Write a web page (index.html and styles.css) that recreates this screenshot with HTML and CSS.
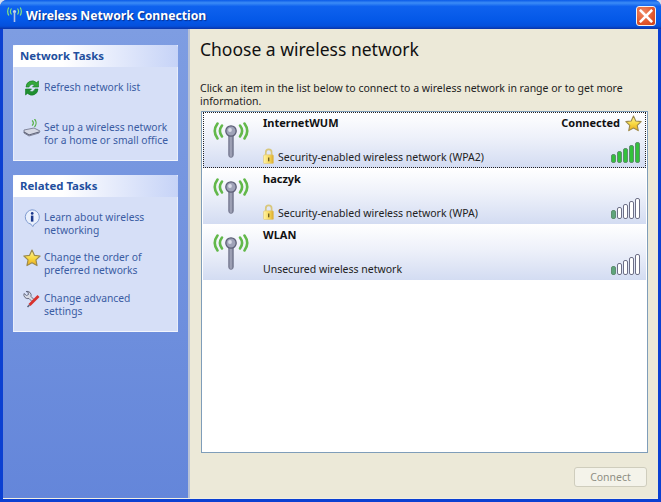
FILE: index.html
```html
<!DOCTYPE html>
<html lang="en">
<head>
<meta charset="utf-8">
<title>Wireless Network Connection</title>
<link rel="stylesheet" href="styles.css">
</head>
<body>
<svg class="defs" width="0" height="0" aria-hidden="true">
  <defs>
    <linearGradient id="star-fill" x1="0" y1="0" x2="0" y2="1">
      <stop offset="0" stop-color="#fff3a0"/>
      <stop offset=".55" stop-color="#f8d83e"/>
      <stop offset="1" stop-color="#eaa820"/>
    </linearGradient>
    <linearGradient id="lock-fill" x1="0" y1="0" x2="1" y2="0">
      <stop offset="0" stop-color="#fff4a8"/>
      <stop offset=".6" stop-color="#f6d657"/>
      <stop offset="1" stop-color="#d9a92e"/>
    </linearGradient>
    <linearGradient id="stem-fill" x1="0" y1="0" x2="1" y2="0">
      <stop offset="0" stop-color="#7a7d96"/>
      <stop offset=".5" stop-color="#a7aabd"/>
      <stop offset="1" stop-color="#6d7088"/>
    </linearGradient>
    <symbol id="antenna" viewBox="0 0 36 36">
      <g fill="none" stroke="#62b84a" stroke-width="2.6" stroke-linecap="round">
        <path d="M4.5 1.5 Q-1 9 4.5 16.5"/>
        <path d="M9 3.5 Q4.8 9 9 14.5"/>
        <path d="M31.5 1.5 Q37 9 31.5 16.5"/>
        <path d="M27 3.5 Q31.2 9 27 14.5"/>
      </g>
      <rect x="15.7" y="12" width="4.6" height="23.4" rx="2.3" fill="url(#stem-fill)" stroke="#686b84" stroke-width=".7"/>
      <circle cx="18" cy="9" r="5.2" fill="#9fa3b8" stroke="#5c5f76" stroke-width="1.3"/>
      <circle cx="17" cy="8" r="1.9" fill="#dadce8"/>
    </symbol>
    <symbol id="lock" viewBox="0 0 11 16">
      <path d="M2.8 8V4.2a2.9 2.9 0 0 1 5.8 0V8" fill="none" stroke="#d8c77c" stroke-width="1.7"/>
      <rect x=".5" y="6.8" width="10" height="8.8" rx="1.2" fill="url(#lock-fill)" stroke="#dcc27a" stroke-width=".6"/>
      <rect x="5" y="9.5" width="1.4" height="3.8" fill="#6f5f24"/>
    </symbol>
    <symbol id="star" viewBox="0 0 20 20">
      <path d="M10 1.2l2.7 5.8 6.3.8-4.6 4.3 1.2 6.3L10 15.3l-5.6 3.1 1.2-6.3L1 7.8l6.3-.8z" fill="url(#star-fill)" stroke="#9c8a4c" stroke-width="1.3" stroke-linejoin="round"/>
    </symbol>
  </defs>
</svg>

<main class="window">
  <header class="titlebar">
    <svg class="title-icon" viewBox="0 0 17 15" aria-hidden="true">
      <g fill="none" stroke="#84e67e" stroke-width="1.2">
        <path d="M5.5 1.5a5 5 0 0 0 0 6"/><path d="M2.8 0.5a8 8 0 0 0 0 8"/>
        <path d="M11.5 1.5a5 5 0 0 1 0 6"/><path d="M14.2 0.5a8 8 0 0 1 0 8"/>
      </g>
      <circle cx="8.5" cy="4.5" r="1.6" fill="#c6d2ee"/>
      <rect x="7.7" y="5" width="1.6" height="10" fill="#b5c4e8"/>
    </svg>
    <h1 class="title">Wireless Network Connection</h1>
    <button class="close" type="button" aria-label="Close">
      <svg viewBox="0 0 12 12" aria-hidden="true"><path d="M1.5 1.5l9 9M10.5 1.5l-9 9" stroke="#fff" stroke-width="2.2" stroke-linecap="square"/></svg>
    </button>
  </header>

  <div class="body">
    <aside class="sidebar">
      <section class="panel">
        <h2 class="panel-head">Network Tasks</h2>
        <ul class="tasks">
          <li class="task">
            <svg class="task-icon" viewBox="0 0 18 18" aria-hidden="true">
              <path d="M3 8a6.2 6.2 0 0 1 10.5-4.4L15.5 2v6h-6l2-2A3.6 3.6 0 0 0 6 8z" fill="#35a83a" stroke="#137a25" stroke-width=".6"/>
              <path d="M15 10a6.2 6.2 0 0 1-10.5 4.4L2.5 16v-6h6l-2 2A3.6 3.6 0 0 0 12 10z" fill="#1f8f30" stroke="#137a25" stroke-width=".6"/>
            </svg>
            <span>Refresh network list</span>
          </li>
          <li class="task">
            <svg class="task-icon" viewBox="0 0 18 18" aria-hidden="true">
              <g fill="none" stroke="#4fae3c" stroke-width="1.2"><path d="M9 1.5a3 3 0 0 1 0 5"/><path d="M11.5 0a6 6 0 0 1 0 8"/></g>
              <path d="M1 11l10-2 6 3-1 2-10 3-5-3z" fill="#d5d8e4" stroke="#5d6278" stroke-width=".7"/>
              <path d="M1 13l5 3 10-3" fill="none" stroke="#5d6278" stroke-width="1.1"/>
            </svg>
            <span>Set up a wireless network for a home or small office</span>
          </li>
        </ul>
      </section>

      <section class="panel">
        <h2 class="panel-head">Related Tasks</h2>
        <ul class="tasks">
          <li class="task">
            <svg class="task-icon" viewBox="0 0 18 18" aria-hidden="true">
              <path d="M9 .8a7.3 7.3 0 0 1 2.4 14.2L9.8 17.6 8 15.2A7.3 7.3 0 0 1 9 .8z" fill="#eaf0fc" stroke="#7f9bd0" stroke-width="1"/>
              <rect x="7.9" y="6.6" width="2.5" height="6" fill="#1a378c"/>
              <circle cx="9.2" cy="4.4" r="1.35" fill="#1a378c"/>
            </svg>
            <span>Learn about wireless networking</span>
          </li>
          <li class="task">
            <svg class="task-icon" aria-hidden="true"><use href="#star"/></svg>
            <span>Change the order of preferred networks</span>
          </li>
          <li class="task task-last">
            <svg class="task-icon" viewBox="0 0 18 18" aria-hidden="true">
              <path d="M3 1.5a4 4 0 0 1 5 5l3 3-2 2-3-3a4 4 0 0 1-5-5l2.5 2 2-1-.5-2.5z" fill="#d7dae4" stroke="#5d6278" stroke-width=".9"/>
              <path d="M15.5 6L6.5 15" stroke="#d8322e" stroke-width="2.8"/>
              <path d="M6.5 15L4.5 17" stroke="#5d6278" stroke-width="1.6"/>
            </svg>
            <span>Change advanced<br>settings</span>
          </li>
        </ul>
      </section>
    </aside>

    <div class="content">
      <h2 class="heading">Choose a wireless network</h2>
      <p class="intro">Click an item in the list below to connect to a wireless network in range or to get more information.</p>

      <div class="list">
        <article class="network selected">
          <svg class="antenna" aria-hidden="true"><use href="#antenna"/></svg>
          <div class="net-info">
            <div class="net-top">
              <span class="net-name">InternetWUM</span>
              <span class="net-status">Connected
                <svg class="status-star" aria-hidden="true"><use href="#star"/></svg>
              </span>
            </div>
            <div class="net-bottom">
              <svg class="lock" aria-hidden="true"><use href="#lock"/></svg>
              <span class="net-sec">Security-enabled wireless network (WPA2)</span>
              <span class="signal">
                <i class="bar on b1"></i><i class="bar on b2"></i><i class="bar on b3"></i><i class="bar on b4"></i><i class="bar on b5"></i>
              </span>
            </div>
          </div>
        </article>

        <article class="network">
          <svg class="antenna" aria-hidden="true"><use href="#antenna"/></svg>
          <div class="net-info">
            <div class="net-top"><span class="net-name">haczyk</span></div>
            <div class="net-bottom">
              <svg class="lock" aria-hidden="true"><use href="#lock"/></svg>
              <span class="net-sec">Security-enabled wireless network (WPA)</span>
              <span class="signal">
                <i class="bar low b1"></i><i class="bar b2"></i><i class="bar b3"></i><i class="bar b4"></i><i class="bar b5"></i>
              </span>
            </div>
          </div>
        </article>

        <article class="network">
          <svg class="antenna" aria-hidden="true"><use href="#antenna"/></svg>
          <div class="net-info">
            <div class="net-top"><span class="net-name">WLAN</span></div>
            <div class="net-bottom">
              <span class="net-sec">Unsecured wireless network</span>
              <span class="signal">
                <i class="bar low b1"></i><i class="bar b2"></i><i class="bar b3"></i><i class="bar b4"></i><i class="bar b5"></i>
              </span>
            </div>
          </div>
        </article>
      </div>

      <div class="actions">
        <button class="connect" type="button" disabled>Connect</button>
      </div>
    </div>
  </div>
</main>
</body>
</html>
```

FILE: styles.css
```css
* { box-sizing: border-box; }
html, body { margin: 0; padding: 0; }
body {
  width: 661px;
  height: 502px;
  overflow: hidden;
  font-family: "Noto Sans", "Open Sans", sans-serif;
  font-size: 11px;
  background: #d8dfee;
}
.defs { position: absolute; }

.window {
  width: 661px;
  height: 502px;
  display: flex;
  flex-direction: column;
  padding: 0 3px 3px;
  background: #0b40d2;
  border-radius: 7px 7px 0 0;
}

.titlebar {
  height: 29px;
  flex: none;
  margin: 0 -3px;
  padding: 0 5px 0 6px;
  display: flex;
  align-items: center;
  background: linear-gradient(180deg, #0a5ae8 0%, #3c8cf6 10%, #0f62ee 22%, #0458e8 70%, #0450dc 90%, #0a34a8 100%);
  border-radius: 7px 7px 0 0;
}
.title-icon { width: 17px; height: 15px; flex: none; }
.title {
  margin: 3px 0 0 3px;
  flex: 1;
  color: #fff;
  font-size: 12.2px;
  font-weight: 700;
  line-height: 16px;
  text-shadow: 1px 1px 1px #0a2d8a;
}
.close {
  width: 20px;
  height: 20px;
  padding: 2px;
  border: 1px solid #f2f2f2;
  border-radius: 3px;
  background: radial-gradient(circle at 35% 30%, #f08a64, #e0562c 60%, #c93e18);
  display: flex;
  margin-top: 3px;
}
.close svg { width: 100%; height: 100%; }

.body {
  flex: 1;
  min-height: 0;
  display: flex;
  border-bottom: 1px solid #f1efe2;
}

.sidebar {
  width: 187px;
  flex: none;
  padding: 16px 10px 0;
  background: linear-gradient(180deg, #7e9de2 0%, #6486da 100%);
  border-right: 2px solid #b8c2d6;
}

.panel {
  width: 165px;
  margin-bottom: 14px;
  background: #d6dff7;
  border-bottom: 1px solid #f2f5fd;
  border-left: 1px solid #e8edfa;
  border-right: 1px solid #e8edfa;
}
.panel-head {
  margin: 0 -1px;
  height: 22px;
  padding: 0 0 2px 7px;
  display: flex;
  align-items: center;
  color: #234f9e;
  font-size: 11.4px;
  font-weight: 700;
  background: linear-gradient(90deg, #fff 0%, #fff 30%, #c6d3f7 100%);
  border-radius: 3px 3px 0 0;
}
.tasks { list-style: none; margin: 0; padding: 14px 0 13px 9px; }
.task {
  display: flex;
  align-items: flex-start;
  color: #3a5ca3;
  line-height: 13px;
  font-size: 10.3px;
  min-height: 26px;
  margin-bottom: 14px;
}
.task:last-child { margin-bottom: 0; }
.task-last { margin-top: 15px; }
.task-icon { width: 18px; height: 18px; flex: none; margin: -2px 3px 0 0; }
.task span { flex: 1; }

.content {
  flex: 1;
  min-width: 0;
  display: flex;
  flex-direction: column;
  padding: 10px 10px 0;
  background: #ece9d8;
}
.heading {
  margin: 0;
  font-size: 17.5px;
  font-weight: 400;
  line-height: 20px;
  color: #111;
}
.intro {
  margin: 23px 0 0;
  line-height: 13px;
  font-size: 10.5px;
  color: #222;
}
.list {
  margin: 3px 0 0 1px;
  height: 342px;
  flex: none;
  padding: 0 1px;
  background: #fff;
  border: 1px solid #7f9db9;
}
.network {
  height: 56px;
  display: flex;
  padding: 0 4px 0 3px;
  background: linear-gradient(180deg, #fff 0%, #eef1fa 45%, #d3dcf2 100%);
}
.selected {
  outline: 1px dotted #222;
  outline-offset: -1px;
}
.antenna { width: 36px; height: 36px; flex: none; margin: 10px 0 0 7px; }
.net-info { flex: 1; min-width: 0; display: flex; flex-direction: column; margin-left: 14px; }
.net-top { display: flex; justify-content: space-between; align-items: flex-start; padding-top: 4px; height: 31px; }
.net-name { font-weight: 700; color: #111; font-size: 11px; line-height: 14px; }
.net-status { display: flex; align-items: flex-start; font-weight: 700; color: #111; line-height: 14px; }
.status-star { width: 17px; height: 17px; flex: none; margin: -1px 0 0 5px; }
.net-bottom { display: flex; align-items: flex-end; height: 25px; padding-bottom: 4px; }
.lock { width: 11px; height: 16px; flex: none; margin: 0 4px 0 0; }
.net-sec { flex: 1; font-size: 10.5px; line-height: 13px; color: #222; }
.signal { display: flex; align-items: flex-end; gap: 1px; flex: none; margin: 0 2px 1px 0; }
.bar {
  display: block;
  width: 5px;
  border: 1px solid #6d6f86;
  border-radius: 2px;
  background: #fff;
}
.bar.on { background: #33c13c; border-color: #5f8f70; }
.bar.low { background: #5fa57c; border-color: #5f8f70; }
.b1 { height: 9px; }
.b2 { height: 12px; }
.b3 { height: 15px; }
.b4 { height: 18px; }
.b5 { height: 21px; }

.actions { display: flex; justify-content: flex-end; margin-top: 14px; padding-right: 1px; }
.connect {
  width: 73px;
  height: 20px;
  padding: 0;
  font-family: inherit;
  font-size: 10.5px;
  color: #8f8f84;
  background: #f4f3ea;
  border: 1px solid #cfcdbd;
  border-radius: 3px;
}
```
